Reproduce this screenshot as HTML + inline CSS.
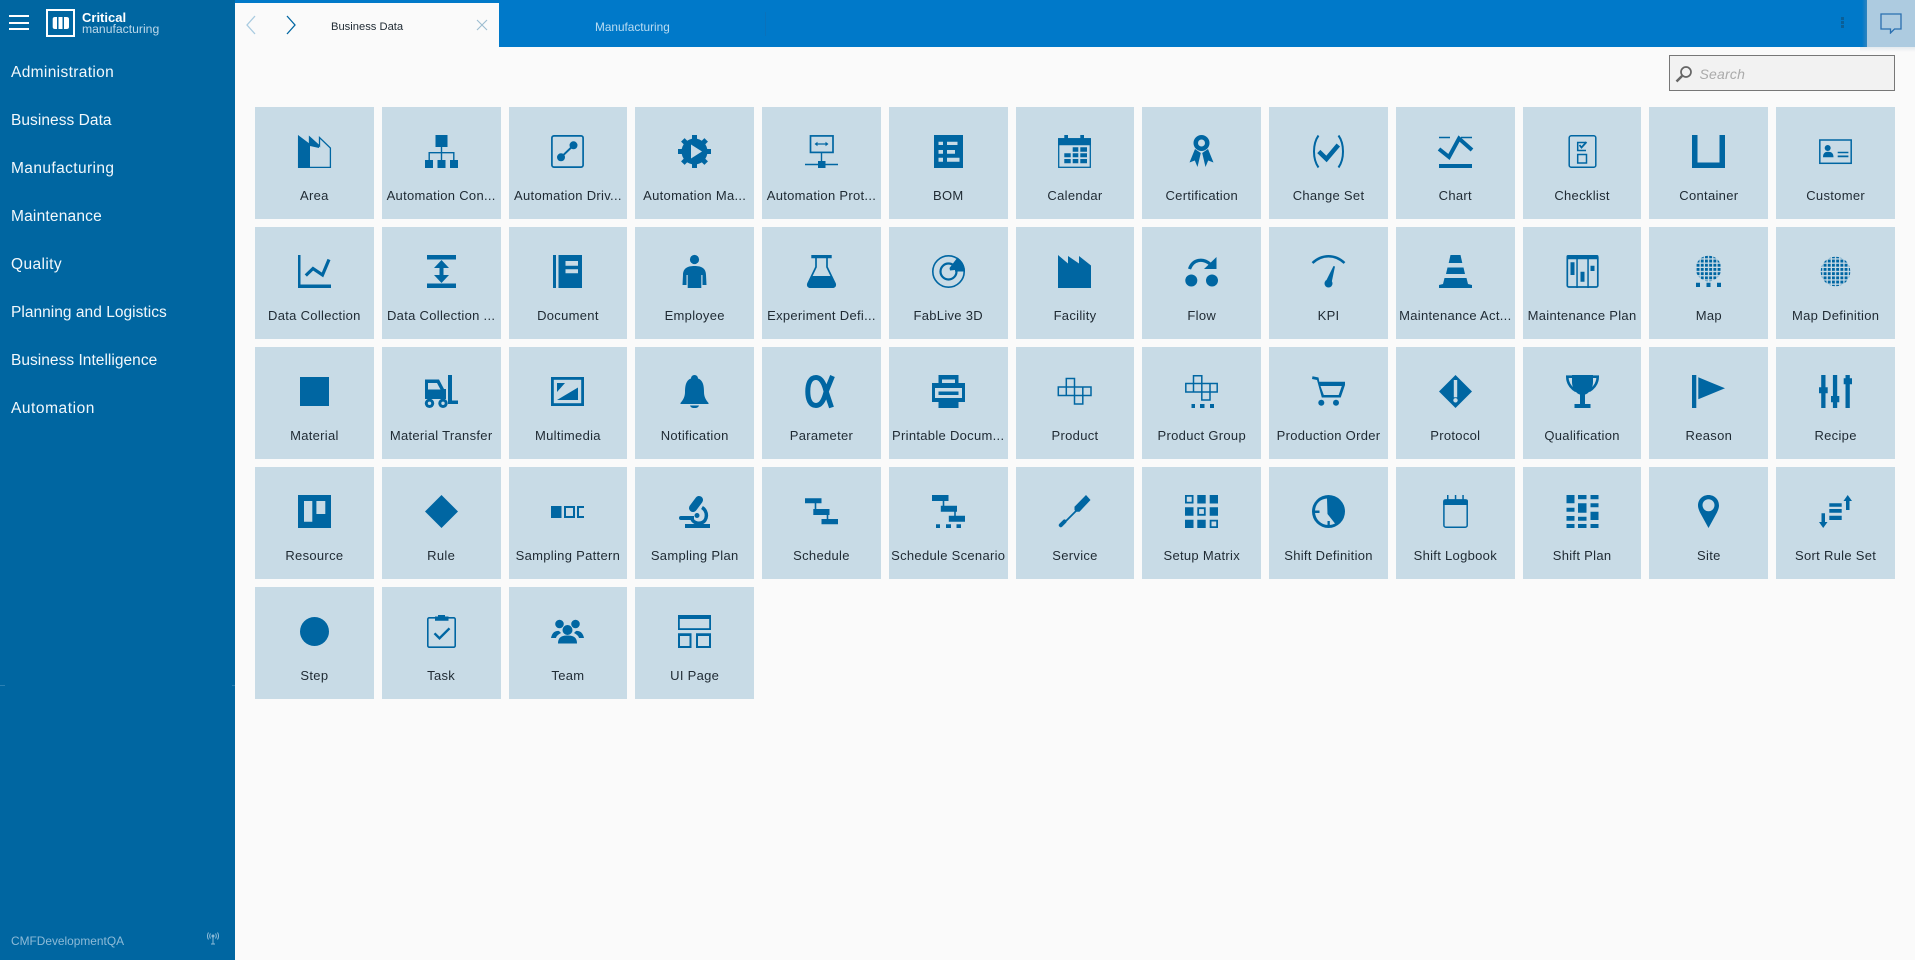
<!DOCTYPE html>
<html lang="en"><head><meta charset="utf-8"><title>Business Data</title>
<style>
*{box-sizing:border-box}
html,body{margin:0;padding:0;width:1915px;height:960px;overflow:hidden;background:#fafafa;font-family:"Liberation Sans",sans-serif}
#side{position:absolute;left:0;top:0;width:235px;height:960px;background:#0066a1;color:#fff}
#side .m{position:absolute;left:11px;font-size:15.5px;line-height:20px;color:#f2f8fc}
.ham{position:absolute;left:9px;width:20px;height:2px;background:#fff}
#logo{position:absolute;left:46px;top:9px;width:29px;height:28px;border:2px solid #fff}
#top{position:absolute;left:235px;top:0;width:1680px;height:47px;background:#0079c9}
#tab{position:absolute;left:235px;top:3px;width:264px;height:44px;background:#fafafa}
.t{position:absolute;white-space:nowrap}
#search{position:absolute;left:1669px;top:55px;width:226px;height:36px;border:1.5px solid #777;background:#f2f2f2}
#grid{position:absolute;left:255px;top:107px;width:1640px;display:grid;grid-template-columns:repeat(13,1fr);grid-auto-rows:112px;gap:8px}
.c{position:relative;background:#c8dbe6}
.c svg{position:absolute;left:50%;margin-left:-16.5px;top:28px;width:33px;height:33px;fill:#0066a2;overflow:visible;stroke-width:1.5}
.c span{position:absolute;left:0;right:0;top:81px;text-align:center;font-size:13px;line-height:16px;letter-spacing:.3px;color:#1f2a33;white-space:nowrap}
.l{fill:#c8dbe6}
.s{fill:none;stroke:#0066a2}
</style></head><body>
<svg width="0" height="0" style="position:absolute"><defs><pattern id="g" width="4.2" height="4.2" patternUnits="userSpaceOnUse" x="0.4" y="0.4"><rect width="2.9" height="2.9" fill="#0066a2"/></pattern></defs></svg>

<div id="side">
<div class="ham" style="top:15px"></div><div class="ham" style="top:22px"></div><div class="ham" style="top:28px"></div>
<div id="logo"><svg width="25" height="24" viewBox="0 0 25 24" style="display:block"><path fill="#fff" d="M4.700 8Q4.700 6 7 6H9V18H7Q4.700 18 4.700 16ZM10.500 6H14.500V18H10.500ZM16 6H18.500Q21 6 21 8V16Q21 18 18.500 18H16Z"/></svg></div>
<div class="t" style="left:82px;top:10px;font-size:13px;line-height:15px;font-weight:bold;color:#fff">Critical</div>
<div class="t" style="left:82px;top:22px;font-size:12.2px;line-height:14px;color:#bcd8ea">manufacturing</div>
<div class="m" style="top:63px;letter-spacing:.35px">Administration</div>
<div class="m" style="top:111px;letter-spacing:.05px">Business Data</div>
<div class="m" style="top:159px;letter-spacing:.4px">Manufacturing</div>
<div class="m" style="top:207px;letter-spacing:.2px">Maintenance</div>
<div class="m" style="top:255px;letter-spacing:.4px">Quality</div>
<div class="m" style="top:303px;letter-spacing:.03px">Planning and Logistics</div>
<div class="m" style="top:351px;letter-spacing:.03px">Business Intelligence</div>
<div class="m" style="top:399px;letter-spacing:.55px">Automation</div>
<div class="t" style="left:11px;top:933px;font-size:11.9px;line-height:16px;color:#8dbbd8">CMFDevelopmentQA</div>
<svg style="position:absolute;left:207px;top:932px" width="12" height="13" viewBox="0 0 12 13" fill="none" stroke="#8dbbd8" stroke-width="1"><circle cx="6" cy="4" r="1" fill="#8dbbd8"/><path d="M6 5V12M4 12H8M3.500 1.500C2.500 3 2.500 5 3.500 6.500M8.500 1.500C9.500 3 9.500 5 8.500 6.500M1.500 .5C0 3 0 5 1.500 7.500M10.500 .5C12 3 12 5 10.500 7.500"/></svg>
<div style="position:absolute;left:0;top:685px;width:5px;height:1px;background:#2a80b3"></div>
<div style="position:absolute;left:232px;top:685px;width:3px;height:1px;background:#2a80b3"></div>
</div>

<div id="top"></div>
<div id="tab"></div>
<svg style="position:absolute;left:245px;top:15px" width="12" height="20" viewBox="0 0 12 20" fill="none" stroke="#a9cbe0" stroke-width="1.300"><path d="M10 1L2 10L10 19"/></svg>
<svg style="position:absolute;left:285px;top:15px" width="12" height="20" viewBox="0 0 12 20" fill="none" stroke="#0066a2" stroke-width="1.300"><path d="M2 1L10 10L2 19"/></svg>
<div class="t" style="left:331px;top:19px;font-size:11.2px;line-height:16px;color:#1f2a33">Business Data</div>
<svg style="position:absolute;left:476px;top:19px" width="12" height="12" viewBox="0 0 12 12" stroke="#9dbdd0" stroke-width="1.100"><path d="M1 1L11 11M11 1L1 11"/></svg>
<div class="t" style="left:595px;top:19px;font-size:11.8px;line-height:16px;color:#b9dcf2">Manufacturing</div>
<div style="position:absolute;left:765px;top:12px;width:1px;height:24px;background:#0a72bb"></div>
<div style="position:absolute;left:1841px;top:17px;width:3px;height:3px;background:#0a5f98"></div>
<div style="position:absolute;left:1841px;top:21px;width:3px;height:3px;background:#0a5f98"></div>
<div style="position:absolute;left:1841px;top:25px;width:3px;height:3px;background:#0a5f98"></div>
<div style="position:absolute;left:1862px;top:0;width:5px;height:47px;background:linear-gradient(90deg,#0079c9,#2f84bf)"></div>
<div style="position:absolute;left:1867px;top:0;width:48px;height:47px;background:#adcbe0"></div>
<div style="position:absolute;left:1860px;top:47px;width:55px;height:5px;background:linear-gradient(#e4ebef,#fafafa)"></div>
<svg style="position:absolute;left:1880px;top:13px" width="22" height="21" viewBox="0 0 22 21" fill="none" stroke="#2a6fb0" stroke-width="1.300"><path d="M1 1H21V16H14.500L10.500 20V16H1Z"/></svg>

<div id="search">
<svg style="position:absolute;left:4.500px;top:8.500px" width="18" height="18" viewBox="0 0 18 18" fill="none" stroke="#666" stroke-width="1.700"><circle cx="11" cy="7" r="5"/><path d="M7 11L1.500 16.500" stroke-width="2.500"/></svg>
<div class="t" style="left:29.500px;top:8.500px;font-size:14px;line-height:18px;font-style:italic;color:#aaa;letter-spacing:.2px">Search</div>
</div>

<div id="grid">
<div class="c"><svg viewBox="0 0 33 33"><path class="s" stroke-width="1.300" d="M.6 1.500L11.500 10V2L21.500 11V2.500L32.400 13V32.400H.6Z"/><path d="M0 0L12 9V33H0Z"/><path d="M12 2L21 10V13L12 11Z"/></svg><span>Area</span></div>
<div class="c"><svg viewBox="0 0 33 33"><path d="M10.500 0H22.500V12H10.500ZM0 25H8V33H0ZM12.500 25H20.500V33H12.500ZM25 25H33V33H25ZM15.800 12H17.200V17H29.500V25H28.100V18.400H17.200V25H15.800V18.400H4.900V25H3.500V17H15.800Z"/></svg><span>Automation Con...</span></div>
<div class="c"><svg viewBox="0 0 33 33"><rect class="s" stroke-width="1.700" x=".9" y=".9" width="31.200" height="31.200" rx="2"/><circle cx="10" cy="22.300" r="4"/><circle cx="22.500" cy="10.300" r="4"/><path d="M10 22.300L22.500 10.300" stroke="#0066a2" stroke-width="2"/></svg><span>Automation Driv...</span></div>
<div class="c"><svg viewBox="0 0 33 33"><circle cx="16.500" cy="16.500" r="13"/><rect x="14" y="0" width="5" height="33"/><rect x="14" y="0" width="5" height="33" transform="rotate(45 16.500 16.500)"/><rect x="14" y="0" width="5" height="33" transform="rotate(90 16.500 16.500)"/><rect x="14" y="0" width="5" height="33" transform="rotate(135 16.500 16.500)"/><path class="l" d="M13 9.500L24 16.500L13 23.500Z"/></svg><span>Automation Ma...</span></div>
<div class="c"><svg viewBox="0 0 33 33"><rect class="s" stroke-width="1.700" x="5.500" y=".9" width="22.500" height="16.500"/><path d="M9.500 9L12.500 6.800V8.400H20.500V6.800L23.500 9L20.500 11.200V9.600H12.500V11.200ZM15.800 17H17.200V27H15.800ZM0 28.800H13V26H20.500V28.800H33V30.300H20.500V33H13V30.300H0Z"/></svg><span>Automation Prot...</span></div>
<div class="c"><svg viewBox="0 0 33 33"><path d="M2 0H31V33H2Z"/><path class="l" d="M6.500 6.700H11V10H6.500ZM15 6.700H25.500V10H15ZM6.500 15H11V18.700H6.500ZM15 15H23V18.700H15ZM6.500 22.700H11V26.700H6.500ZM15 22.700H27.500V26.700H15Z"/></svg><span>BOM</span></div>
<div class="c"><svg viewBox="0 0 33 33"><rect class="s" stroke-width="1.300" x=".7" y="3.700" width="31.600" height="28.600"/><path d="M6.300 0H10V4H6.300ZM22.300 0H26V4H22.300ZM0 3.500H33V10.300H0ZM14.700 12.300H20.300V16.700H14.700ZM22.300 12.300H29V16.700H22.300ZM6.300 18.300H12.700V22.300H6.300ZM14.700 18.300H20.300V22.300H14.700ZM22.300 18.300H29V22.300H22.300ZM6.300 24H12.700V28.300H6.300ZM14.700 24H20.300V28.300H14.700ZM22.300 24H29V28.300H22.300Z"/></svg><span>Calendar</span></div>
<div class="c"><svg viewBox="0 0 33 33"><path d="M10 14L4.500 27.500L9.800 25.500L12.500 32L15.800 18ZM23 14L28.500 27.500L23.200 25.500L20.500 32L17.200 18Z"/><circle cx="16.500" cy="8" r="8"/><circle class="l" cx="16.500" cy="8" r="3.500"/></svg><span>Certification</span></div>
<div class="c"><svg viewBox="0 0 33 33"><path class="s" stroke-width="2" d="M6.500 .5C.5 9 .5 24 6.500 32.500M26.500 .5C32.500 9 32.500 24 26.500 32.500"/><path fill="none" stroke="#0066a2" stroke-width="4.500" d="M6.800 16.500L14.500 24L26.300 10"/></svg><span>Change Set</span></div>
<div class="c"><svg viewBox="0 0 33 33"><path d="M0 1.700H11V3.300H0ZM22 1.700H33V3.300H22ZM0 29H33V33H0Z"/><path fill="none" stroke="#0066a2" stroke-width="4" d="M0 14L10 22L20 3.500L33 15"/></svg><span>Chart</span></div>
<div class="c"><svg viewBox="0 0 33 33"><rect class="s" x="3.200" y=".8" width="26.600" height="31.400" rx="2"/><path class="s" d="M20 7.500H11.700V15.500H20M11.700 19.500H20.500V28H11.700Z"/><path fill="none" stroke="#0066a2" stroke-width="1.800" d="M13.500 10L15.500 12.500L20.500 7"/></svg><span>Checklist</span></div>
<div class="c"><svg viewBox="0 0 33 33"><path d="M0 0H5.500V27.500H27.500V0H33V33H0Z"/></svg><span>Container</span></div>
<div class="c"><svg viewBox="0 0 33 33"><rect class="s" x=".8" y="5" width="31.400" height="23.300"/><circle cx="8.700" cy="13" r="3"/><path d="M4 22.300C4 18 6 16.700 9 16.700C12.500 16.700 14.500 18 14.500 22.300ZM18.700 16.700H29.400V18.300H18.700ZM18.700 20.500H29.400V22.300H18.700Z"/></svg><span>Customer</span></div>

<div class="c"><svg viewBox="0 0 33 33"><path d="M0 0H2.500V29.500H33V33H0Z"/><path fill="none" stroke="#0066a2" stroke-width="3.200" d="M7.800 20.500L15 13.500L24.500 20L31 4.500"/></svg><span>Data Collection</span></div>
<div class="c"><svg viewBox="0 0 33 33"><path d="M2 0H31V4.500H2ZM2 28.500H31V33H2ZM16.500 5L24 13H18.500V20H24L16.500 28L9 20H14.500V13H9Z"/></svg><span>Data Collection ...</span></div>
<div class="c"><svg viewBox="0 0 33 33"><path d="M2 0H5V33H2ZM7.500 0H31V33H7.500Z"/><path class="l" d="M14.500 6H27V10.700H14.500ZM14.500 14.300H27V18.300H14.500Z"/></svg><span>Document</span></div>
<div class="c"><svg viewBox="0 0 33 33"><circle cx="16.500" cy="4.500" r="4.600"/><path d="M16.500 11C10 11 5 13 5 20L4.500 30H8.500V20H9.700V33H23.300V20H24.500V30H28.500L28 20C28 13 23 11 16.500 11Z"/></svg><span>Employee</span></div>
<div class="c"><svg viewBox="0 0 33 33"><path d="M6.300 0H26.700V3.300H6.300Z"/><path class="s" stroke-width="1.700" d="M11 3V12L3 28.500Q2 32.200 6 32.200H27Q31 32.200 30 28.500L22 12V3"/><path d="M7.500 21H25.500L30.500 30Q31 33 27 33H6Q2 33 2.500 30Z"/></svg><span>Experiment Defi...</span></div>
<div class="c"><svg viewBox="0 0 33 33"><circle class="s" stroke-width="1.600" cx="16.500" cy="16.500" r="15.700"/><circle fill="none" stroke="#0066a2" stroke-width="2.200" cx="16.500" cy="16.500" r="8"/><path d="M25.500 2.500A16.500 16.500 0 0 1 33 16.500H23V15L18 15.500L17.500 13Z"/></svg><span>FabLive 3D</span></div>
<div class="c"><svg viewBox="0 0 33 33"><path d="M0 0L10 8.500V1L21 8.500V1L33 10.500V33H0Z"/></svg><span>Facility</span></div>
<div class="c"><svg viewBox="0 0 33 33"><circle cx="6.300" cy="25.500" r="6"/><circle cx="27" cy="25.500" r="6"/><path fill="none" stroke="#0066a2" stroke-width="3.200" d="M4.500 14C8 4 18 3 25 9"/><path d="M31.500 2V14H19Z"/></svg><span>Flow</span></div>
<div class="c"><svg viewBox="0 0 33 33"><path fill="none" stroke="#0066a2" stroke-width="2.500" d="M.5 8C10 -1 23 -1 32.500 8"/><path d="M13.500 27L21.500 11L23 11.500L19.500 28Z"/><circle cx="16.500" cy="28.500" r="4"/></svg><span>KPI</span></div>
<div class="c"><svg viewBox="0 0 33 33"><path d="M11.500 0H21.500L23.300 8H9.700ZM8.500 12.500H24.500L26 19H7ZM5.500 23H27.500L29 29L33 30V33H0V30L4 29Z"/></svg><span>Maintenance Act...</span></div>
<div class="c"><svg viewBox="0 0 33 33"><rect class="s" stroke-width="1.700" x="1.300" y="1" width="30.500" height="31" rx="1.500"/><path d="M.5 1.500Q.5 0 2 0H31Q32.500 0 32.500 1.500V4.300H.5ZM10.300 4H11.800V33H10.300ZM21.300 4H22.800V33H21.300ZM4.500 7.300H8.500V20H4.500ZM14.500 16.700H18.500V26.700H14.500ZM24.500 10.700H28.500V16H24.500Z"/></svg><span>Maintenance Plan</span></div>
<div class="c"><svg viewBox="0 0 33 33"><circle cx="16.500" cy="13.500" r="12.800" style="fill:url(#g)"/><path d="M4 27.700H8V32H4ZM14.500 27.700H18.500V32H14.500ZM25 27.700H29V32H25Z"/></svg><span>Map</span></div>
<div class="c"><svg viewBox="0 0 33 33"><circle cx="16.500" cy="16.500" r="14.800" style="fill:url(#g)"/></svg><span>Map Definition</span></div>

<div class="c"><svg viewBox="0 0 33 33"><rect x="2" y="2" width="29" height="29"/></svg><span>Material</span></div>
<div class="c"><svg viewBox="0 0 33 33"><path d="M23 0H27V25.500H33V29H23ZM0 4.500H14L19 14H21V24H0Z"/><path class="l" d="M3 8H12L15.500 14.500H3Z"/><circle cx="4.500" cy="28.300" r="4.700"/><circle cx="18" cy="28.300" r="4.700"/><circle class="l" cx="4.500" cy="28.300" r="1.700"/><circle class="l" cx="18" cy="28.300" r="1.700"/></svg><span>Material Transfer</span></div>
<div class="c"><svg viewBox="0 0 33 33"><rect class="s" stroke-width="2.800" x="1.400" y="3.400" width="30.200" height="26.200"/><path d="M6 25L27 12.500V25ZM6 8H14L6 17Z"/></svg><span>Multimedia</span></div>
<div class="c"><svg viewBox="0 0 33 33"><path d="M16.500 0C19 0 20 2 20 3.500C25 5 26 11 26 17C26 22 28 25 30.500 28V29H2.500V28C5 25 7 22 7 17C7 11 8 5 13 3.500C13 2 14 0 16.500 0ZM12 30.500H21C20 33 18 33 16.500 33C15 33 13 33 12 30.500Z"/></svg><span>Notification</span></div>
<div class="c"><svg viewBox="0 0 33 33"><path fill="none" stroke="#0066a2" stroke-width="5" d="M27.500 1L21 17C19 25 16 30.500 11 30.500C5 30.500 2.800 24 2.800 16.500C2.800 9 5 2.500 11 2.500C16 2.500 19 8 21 16L26.500 32.500"/></svg><span>Parameter</span></div>
<div class="c"><svg viewBox="0 0 33 33"><path d="M6.500 0H26.500V8H33V27H26.500V33H6.500V27H0V8H6.500Z"/><path class="l" d="M10 4.500H23V8H10ZM3 13H30V23H3Z"/><path d="M6.500 16.500H26.500V20H6.500Z"/></svg><span>Printable Docum...</span></div>
<div class="c"><svg viewBox="0 0 33 33"><path class="s" d="M8.300 12V3.500H16.500V12M.3 12H33V20.500H.3ZM8.300 12V20.500M16.500 12V29H24.800V12"/></svg><span>Product</span></div>
<div class="c"><svg viewBox="0 0 33 33"><path class="s" d="M8.500 8.500V.8H16.800V8.500M.8 8.500H32.200V17H.8ZM8.500 8.500V17M16.800 8.500V25H25V8.500"/><path d="M6.500 29H10V33H6.500ZM15 29H19.500V33H15ZM25 29H29V33H25Z"/></svg><span>Product Group</span></div>
<div class="c"><svg viewBox="0 0 33 33"><path d="M.5 1.300L6.500 2.500L7.300 6.700H33V10L28.700 22.500H9.800L5 5L0 4ZM8.500 11L11.800 20H26.700L29.800 11Z"/><circle cx="9.300" cy="27.700" r="3"/><circle cx="24" cy="27.700" r="3"/></svg><span>Production Order</span></div>
<div class="c"><svg viewBox="0 0 33 33"><path d="M16.500 0L33 16.500L16.500 33L0 16.500Z"/><path class="l" d="M14.800 5H18.200V22.300H14.800Z"/><circle class="l" cx="16.500" cy="25.300" r="2.200"/></svg><span>Protocol</span></div>
<div class="c"><svg viewBox="0 0 33 33"><path d="M6 0H27V7C27 14 22 19 19 19.500V29H14V19.500C11 19 6 14 6 7ZM8.500 29H24.500V33H8.500Z"/><path fill="none" stroke="#0066a2" stroke-width="2.600" d="M6 1.700H1.300C1.300 9 5 13 10 16M27 1.700H31.700C31.700 9 28 13 23 16"/></svg><span>Qualification</span></div>
<div class="c"><svg viewBox="0 0 33 33"><path d="M0 0H4.300V33H0ZM6.300 2.300L33 13.300L6.300 24.300Z"/></svg><span>Reason</span></div>
<div class="c"><svg viewBox="0 0 33 33"><path d="M2.200 0H6.500V33H2.200ZM13.900 0H18.200V33H13.900ZM26.500 0H30.800V33H26.500ZM0 12.300H8.700V18.300H0ZM12 21H20.300V27.300H12ZM24.700 3.300H33V9.300H24.700Z"/></svg><span>Recipe</span></div>

<div class="c"><svg viewBox="0 0 33 33"><path d="M0 0H33V33H0Z"/><path class="l" d="M6 6H14.300V26.700H6ZM18.400 6H27.300V19H18.400Z"/></svg><span>Resource</span></div>
<div class="c"><svg viewBox="0 0 33 33"><path d="M16.500 0L33 16.500L16.500 33L0 16.500Z"/></svg><span>Rule</span></div>
<div class="c"><svg viewBox="0 0 33 33"><path d="M0 11H10.500V23H0Z"/><rect class="s" stroke-width="2" x="14" y="12" width="9" height="10"/><path class="s" stroke-width="2" d="M33 12H27V22H33"/></svg><span>Sampling Pattern</span></div>
<div class="c"><svg viewBox="0 0 33 33"><path fill="none" stroke="#0066a2" stroke-width="8" stroke-linecap="round" d="M21 5L15 13"/><path fill="none" stroke="#0066a2" stroke-width="3.500" d="M24 12.500C30 16 30 26 23 28C19 29 15 27 14 24"/><path d="M3 21H16V25H3A2 2 0 0 1 3 21ZM7 29H32V33H7Z"/><circle cx="19" cy="20.500" r="2.500"/></svg><span>Sampling Plan</span></div>
<div class="c"><svg viewBox="0 0 33 33"><path d="M0 3.300H16.500V8.300H11.300V14H24.500V20H23.300V24H33V29.300H16.500V24H21.700V20H8.300V14H9.700V8.300H0Z"/></svg><span>Schedule</span></div>
<div class="c"><svg viewBox="0 0 33 33"><path d="M0 0H16.500V6H12.300V10.700H25V16.700H23.800V20.700H33V26.700H16.800V20.700H22.200V16.700H8.800V10.700H10.700V6H0ZM4 29.300H8V33H4ZM14 29.300H19V33H14ZM24.500 29.300H29V33H24.500Z"/></svg><span>Schedule Scenario</span></div>
<div class="c"><svg viewBox="0 0 33 33"><path d="M28 0L32.500 5L21.500 16.700H18L16.500 15V11.700Z"/><path fill="none" stroke="#0066a2" stroke-width="1.800" d="M18 16L5 29"/><path fill="none" stroke="#0066a2" stroke-width="4" stroke-linecap="round" d="M2.800 30.200L6.500 26.500"/></svg><span>Service</span></div>
<div class="c"><svg viewBox="0 0 33 33"><path d="M12.300 0H20.700V8.500H12.300ZM24.700 0H33V8.500H24.700ZM0 12.300H8.500V20.700H0ZM24.700 12.300H33V20.700H24.700ZM0 24.700H8.500V33H0ZM12.300 24.700H20.700V33H12.300Z"/><path class="s" stroke-width="1.800" d="M.9 .9H7.600V7.600H.9ZM13.200 13.200H19.800V19.800H13.200ZM25.600 25.600H32.100V32.100H25.600Z"/></svg><span>Setup Matrix</span></div>
<div class="c"><svg viewBox="0 0 33 33"><circle cx="16.500" cy="16.500" r="16.500"/><path class="l" d="M15 3.500C8 4 3 9 3 16.500C3 24 9 30 16.500 30C19 30 21 29.500 23 28.500L15.500 19Z"/><path d="M3 15.500H7.500V18H3ZM15.500 26H17.800V30H15.500Z"/></svg><span>Shift Definition</span></div>
<div class="c"><svg viewBox="0 0 33 33"><rect class="s" x="4.900" y="5" width="23.300" height="27.200" rx="2"/><path d="M4.200 6.300Q4.200 4.300 6.200 4.300H27Q29 4.300 29 6.300V10H4.200ZM8 0H9.500V5H8ZM15.800 0H17.300V5H15.800ZM23.300 0H24.800V5H23.300Z"/></svg><span>Shift Logbook</span></div>
<div class="c"><svg viewBox="0 0 33 33"><path d="M.5 0H8.500V8.300H.5ZM.5 12.700H8.500V16.700H.5ZM.5 21H8.500V25.700H.5ZM.5 29H8.500V33H.5ZM12 0H20.500V4.300H12ZM12 8.300H20.500V17.700H12ZM12 21.700H20.500V25.700H12ZM12 29H20.500V33H12ZM24.500 0H32.500V4.300H24.500ZM24.500 8.300H32.500V12.300H24.500ZM24.500 16.700H32.500V25H24.500ZM24.500 29H32.500V33H24.500Z"/></svg><span>Shift Plan</span></div>
<div class="c"><svg viewBox="0 0 33 33"><path d="M16.500 0C22.500 0 27 4.500 27 10.500C27 13 26 15 25 17.500L16.500 33L8 17.500C7 15 6 13 6 10.500C6 4.500 10.500 0 16.500 0Z"/><circle class="l" cx="16.500" cy="10.300" r="6"/></svg><span>Site</span></div>
<div class="c"><svg viewBox="0 0 33 33"><path d="M28.700 0L33 6H30.500V15H27V6H24.500ZM4.200 33L0 27H2.500V18.300H6V27H8.500ZM10.300 8.300H22.700V11.700H10.300ZM10.300 14H22.700V17.700H10.300ZM10.300 20.700H22.700V25H10.300Z"/></svg><span>Sort Rule Set</span></div>

<div class="c"><svg viewBox="0 0 33 33"><circle cx="16.500" cy="16.500" r="14.500"/></svg><span>Step</span></div>
<div class="c"><svg viewBox="0 0 33 33"><rect class="s" stroke-width="1.600" x="2.800" y="2.800" width="27.400" height="29.400" rx="1.500"/><path d="M10 1.500H13V0H20V1.500H23.500V5.700H10Z"/><path fill="none" stroke="#0066a2" stroke-width="2.400" d="M9.500 18.300L14.500 23.300L24.500 13.300"/></svg><span>Task</span></div>
<div class="c"><svg viewBox="0 0 33 33"><circle cx="8.500" cy="9" r="4.300"/><circle cx="24.500" cy="9" r="4.300"/><path d="M0 23C1 18 4 15.500 8 16L10 18C7 19.500 5.500 21 5 23ZM33 23C32 18 29 15.500 25 16L23 18C26 19.500 27.500 21 28 23Z"/><circle cx="16.500" cy="15" r="5"/><path d="M7 28.500C7 22 11 20.500 16.500 20.500C22 20.500 26 22 26 28.500Z"/></svg><span>Team</span></div>
<div class="c"><svg viewBox="0 0 33 33"><rect class="s" stroke-width="1.800" x=".9" y=".9" width="31.200" height="13.200"/><path d="M0 0H33V4H0ZM0 18.300H13.500V21H0ZM18 18.300H33V21H18Z"/><path class="s" stroke-width="2" d="M1 19V32H12.500V19M19 19V32H32V19"/></svg><span>UI Page</span></div>
</div>
</body></html>
